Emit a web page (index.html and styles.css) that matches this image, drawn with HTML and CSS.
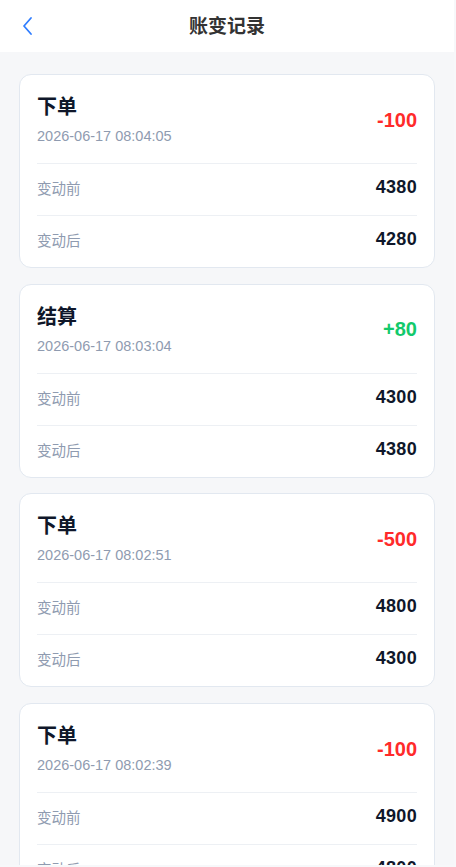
FILE: index.html
```html
<!DOCTYPE html>
<html lang="zh-CN">

<head>
  <meta charset="UTF-8" />
  <meta name="viewport" content="width=device-width, initial-scale=1.0" />
  <title>账变记录</title>
  <link rel="stylesheet" href="styles.css">
</head>

<body>
  <div class="page">
    <div class="header">
      <a class="back" href="#">
        <svg width="12" height="20" viewBox="0 0 12 20">
          <path d="M9 2 L2 10 L9 18" fill="none" stroke="#2f7dff" stroke-width="1.8" stroke-linecap="round" stroke-linejoin="round" />
        </svg>
      </a>
      <h1 class="title">账变记录</h1>
    </div>

    <div class="list">
      <div class="card">
        <div class="card-top">
          <div>
            <p class="type">下单</p>
            <p class="time">2026-06-17 08:04:05</p>
          </div>
          <span class="amount minus">-100</span>
        </div>
        <div class="row"><span class="label">变动前</span><span class="value">4380</span></div>
        <div class="row"><span class="label">变动后</span><span class="value">4280</span></div>
      </div>

      <div class="card">
        <div class="card-top">
          <div>
            <p class="type">结算</p>
            <p class="time">2026-06-17 08:03:04</p>
          </div>
          <span class="amount plus">+80</span>
        </div>
        <div class="row"><span class="label">变动前</span><span class="value">4300</span></div>
        <div class="row"><span class="label">变动后</span><span class="value">4380</span></div>
      </div>

      <div class="card">
        <div class="card-top">
          <div>
            <p class="type">下单</p>
            <p class="time">2026-06-17 08:02:51</p>
          </div>
          <span class="amount minus">-500</span>
        </div>
        <div class="row"><span class="label">变动前</span><span class="value">4800</span></div>
        <div class="row"><span class="label">变动后</span><span class="value">4300</span></div>
      </div>

      <div class="card">
        <div class="card-top">
          <div>
            <p class="type">下单</p>
            <p class="time">2026-06-17 08:02:39</p>
          </div>
          <span class="amount minus">-100</span>
        </div>
        <div class="row"><span class="label">变动前</span><span class="value">4900</span></div>
        <div class="row"><span class="label">变动后</span><span class="value">4800</span></div>
      </div>
    </div>
  </div>
</body>

</html>
```

FILE: styles.css
```css
* {
  box-sizing: border-box;
}

html,
body {
  margin: 0;
  padding: 0;
  background-color: #f7f8fa;
}

body {
  font-family: "Liberation Sans", "Noto Sans CJK SC", sans-serif;
}

p {
  margin: 0;
}

.page {
  width: 454px;
  height: 865px;
  overflow: hidden;
  background-color: #f6f7f9;
}

/* 顶部导航 */
.header {
  position: relative;
  height: 52px;
  background-color: #fff;
  display: flex;
  align-items: center;
  justify-content: center;
}

.header .back {
  position: absolute;
  left: 22px;
  top: 16px;
  display: block;
  width: 12px;
  height: 20px;
}

.header .back svg {
  display: block;
}

.header .title {
  margin: 0;
  font-size: 19px;
  font-weight: bold;
  color: #333;
  line-height: 1;
}

/* 列表 */
.list {
  padding: 22px 19px 0;
  display: flex;
  flex-direction: column;
  gap: 15.7px;
}

.card {
  background-color: #fff;
  border: 1px solid #e2e8f0;
  border-radius: 12px;
  padding: 0 17px;
}

.card-top {
  display: flex;
  justify-content: space-between;
  align-items: center;
  padding: 19px 0 17px;
  border-bottom: 1px solid #edf0f4;
}

.card .type {
  font-size: 20px;
  font-weight: bold;
  line-height: 26px;
  color: #0f172a;
}

.card .time {
  margin-top: 6px;
  font-size: 14.5px;
  line-height: 20px;
  color: #8f9bb0;
}

.card .amount {
  font-size: 20px;
  font-weight: bold;
}

.card .minus {
  color: #ff2a2a;
}

.card .plus {
  color: #12c96b;
}

.card .row {
  display: flex;
  justify-content: space-between;
  align-items: center;
  height: 52px;
  padding-bottom: 4px;
  border-bottom: 1px solid #edf0f4;
}

.card .row:last-child {
  border-bottom: none;
  height: 51px;
}

.card .label {
  font-size: 14.5px;
  color: #8f9bb0;
}

.card .value {
  font-size: 18px;
  font-weight: bold;
  letter-spacing: 0.3px;
  color: #0f172a;
}
```
